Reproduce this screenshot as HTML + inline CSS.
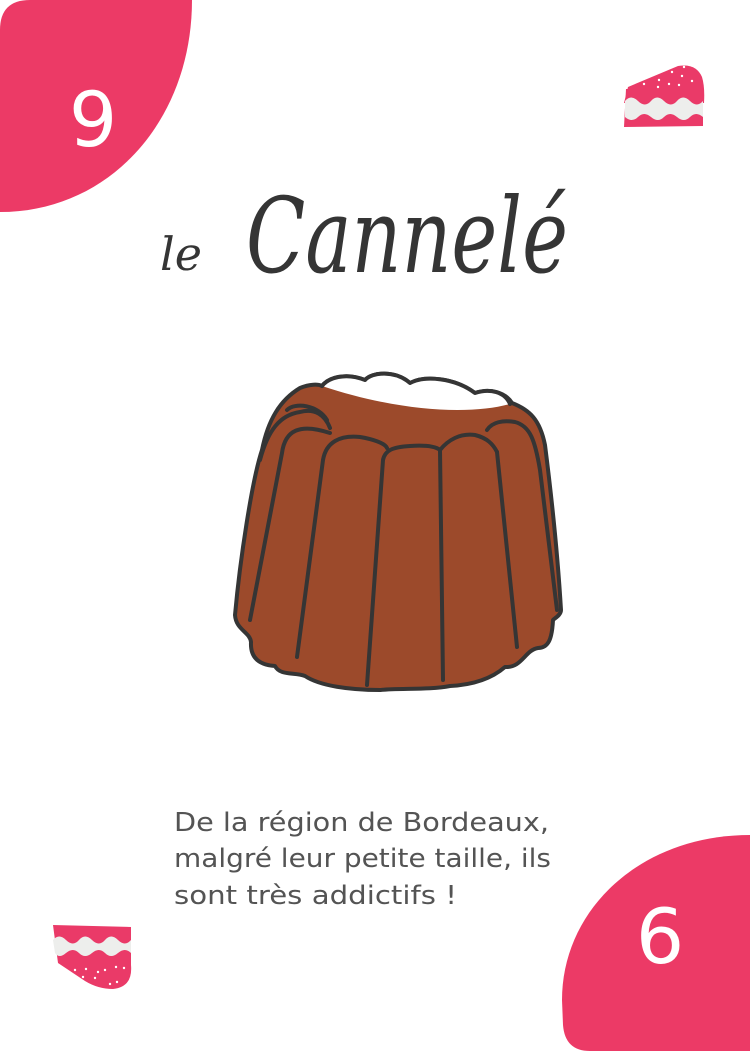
<!DOCTYPE html>
<html><head><meta charset="utf-8"><style>
html,body{margin:0;padding:0;background:#fff;}
body{width:750px;height:1051px;overflow:hidden;position:relative;}
svg{position:absolute;left:0;top:0;}
</style></head><body>
<svg width="750" height="1051" viewBox="0 0 750 1051" xmlns="http://www.w3.org/2000/svg">
<path d="M0,30 Q0,0 30,0 L192,0 C192,120 110,212 0,212 Z" fill="#ec3a66"/>
<path d="M750,835 L750,1051 L590,1051 Q565,1051 563,1025 L562,1000 C562,910 640,835 750,835 Z" fill="#ec3a66"/>
<text x="93" y="146" font-family="DejaVu Sans, sans-serif" font-size="76" fill="#fff" text-anchor="middle">9</text>
<text x="660" y="963" font-family="DejaVu Sans, sans-serif" font-size="76" fill="#fff" text-anchor="middle">6</text>

<g transform="translate(624,63)">
<path d="M4,24 L54,3 Q72,0 78,14 Q81,24 80,40 L0,40 Z" fill="#ea3a68"/>
<path d="M2,26 L79,26 L79,63 L0,64 Z" fill="#ea3a68"/>
<path d="M1,38 Q7,31 14,38 T27,38 T40,38 T53,38 T66,38 T79,38 L79,54 Q72,48 66,54 T53,54 T40,54 T27,54 T14,54 T1,54 Z" fill="#edeeec"/>
<g fill="#fff"><circle cx="20" cy="21" r="1.2"/><circle cx="35" cy="17" r="1.2"/><circle cx="48" cy="9" r="1.2"/><circle cx="58" cy="13" r="1.2"/><circle cx="68" cy="18" r="1.2"/><circle cx="34" cy="24" r="1.2"/><circle cx="45" cy="21" r="1.2"/><circle cx="60" cy="4" r="1.2"/><circle cx="55" cy="22" r="1.2"/></g>
</g>
<g transform="translate(53,925)">
<path d="M0,0 L78,2 L78,40 Q80,62 60,64 Q45,64 32,56 L5,38 Z" fill="#ea3a68"/>
<path d="M0,15 Q6,8 13,15 T26,15 T39,15 T52,15 T65,15 T78,15 L78,28 Q72,22 65,28 T52,28 T39,28 T26,28 T13,28 T2,28 Z" fill="#edeeec"/>
<g fill="#fff"><circle cx="22" cy="45" r="1.2"/><circle cx="33" cy="44" r="1.2"/><circle cx="45" cy="47" r="1.2"/><circle cx="52" cy="45" r="1.2"/><circle cx="63" cy="42" r="1.2"/><circle cx="71" cy="43" r="1.2"/><circle cx="30" cy="52" r="1.2"/><circle cx="42" cy="53" r="1.2"/><circle cx="57" cy="59" r="1.2"/><circle cx="64" cy="57" r="1.2"/></g>
</g>

<text x="160" y="270" font-family="DejaVu Serif, serif" font-style="italic" font-size="46" fill="#353535" textLength="42" lengthAdjust="spacingAndGlyphs">le</text>
<text x="246" y="272" font-family="DejaVu Serif, serif" font-style="italic" font-size="104" fill="#353535" textLength="322" lengthAdjust="spacingAndGlyphs">Cannelé</text>

<g stroke="#353535" stroke-width="4" stroke-linecap="round" stroke-linejoin="round">
<path d="M235,615 C240,560 252,480 262,450 C268,420 280,400 300,388 C310,384 318,384 322,386 C328,378 345,372 365,380 C372,372 395,370 410,383 C425,375 455,378 475,393 C490,388 505,392 512,403 C530,410 540,420 545,445 C552,500 558,560 561,610 C561,615 555,618 553,620 C552,640 548,648 538,648 C525,650 522,668 505,667 C490,680 470,685 450,686 C430,690 400,688 380,690 C350,690 320,686 305,676 C295,672 280,676 275,666 C262,665 250,660 251,642 C250,632 236,630 235,615 Z" fill="#9c4a2b"/>
<path d="M322,386 C328,378 345,372 365,380 C372,372 395,370 410,383 C425,375 455,378 475,393 C490,388 505,392 510,404 C470,415 400,412 322,386 Z" fill="#fff" stroke="none"/>
<path d="M322,386 C328,378 345,372 365,380 C372,372 395,370 410,383 C425,375 455,378 475,393 C490,388 505,392 510,404" fill="none"/>
<g fill="none">
<path d="M287,410 C295,402 318,405 327,420"/>
<path d="M260,460 C268,430 280,415 300,412 C315,408 325,415 330,428"/>
<path d="M250,620 L282,453 C285,430 300,423 330,433"/>
<path d="M297,657 L323,460 C326,442 340,435 360,437 C372,439 385,443 387,448"/>
<path d="M367,685 L383,460 C385,450 393,447 410,446 C425,445 435,446 440,450"/>
<path d="M443,680 L440,450 C448,440 460,433 475,435 C487,438 493,444 497,452"/>
<path d="M517,647 L497,452"/>
<path d="M487,430 C492,422 503,420 515,422 C530,426 535,440 540,470 L557,610"/>
</g>
</g>

<g font-family="DejaVu Sans, sans-serif" font-size="26" fill="#545454">
<text x="174" y="831" textLength="375" lengthAdjust="spacingAndGlyphs">De la région de Bordeaux,</text>
<text x="174" y="867" textLength="377" lengthAdjust="spacingAndGlyphs">malgré leur petite taille, ils</text>
<text x="174" y="904" textLength="283" lengthAdjust="spacingAndGlyphs">sont très addictifs !</text>
</g>
</svg>
</body></html>
